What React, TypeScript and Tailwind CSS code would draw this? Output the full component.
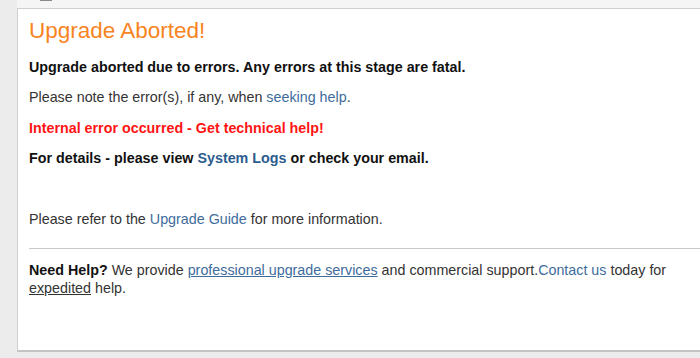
const App = () => {
  return (
    <div className="h-[358px] w-[700px] overflow-hidden bg-[#ececec] pl-[17px] font-['Liberation_Sans',Arial,sans-serif] text-[14.3px] text-[#333]">
      <div className="flex h-[8px] items-start bg-[#f5f5f5] pl-[23px]">
        <span className="h-[1px] w-[12px] bg-[#8a8a8a]" />
      </div>
      <div className="h-[344px] w-[720px] border-l border-t border-[#cfcfcf] border-b-2 border-b-[#c4c4c4] bg-white pl-[11px] pr-[10px] pt-[9px]">
        <h1 className="text-[22.5px] leading-[26px] text-[#f7841f]">Upgrade Aborted!</h1>
        <p className="mt-[14px] font-bold leading-[18px] text-[#111]">
          Upgrade aborted due to errors. Any errors at this stage are fatal.
        </p>
        <p className="mt-[12px] leading-[18px]">
          Please note the error(s), if any, when <a className="text-[#3e6c9c]">seeking help</a>.
        </p>
        <p className="mt-[13px] font-bold leading-[18px] text-[#ff1414]">
          Internal error occurred - Get technical help!
        </p>
        <p className="mt-[12px] font-bold leading-[18px] text-[#111]">
          For details - please view <a className="text-[#2c5c8e]">System Logs</a> or check your email.
        </p>
        <p className="mt-[43px] leading-[18px]">
          Please refer to the <a className="text-[#3e6c9c]">Upgrade Guide</a> for more information.
        </p>
        <hr className="mt-[20px] border-[#c8c8c8]" />
        <p className="mt-[12px] w-[655px] leading-[18px]">
          <b className="text-[#111]">Need Help?</b> We provide{' '}
          <a className="text-[#3e6c9c] underline">professional upgrade services</a> and commercial support.
          <a className="text-[#3e6c9c]">Contact us</a> today for <a className="underline">expedited</a> help.
        </p>
      </div>
    </div>
  );
};

export default App;
